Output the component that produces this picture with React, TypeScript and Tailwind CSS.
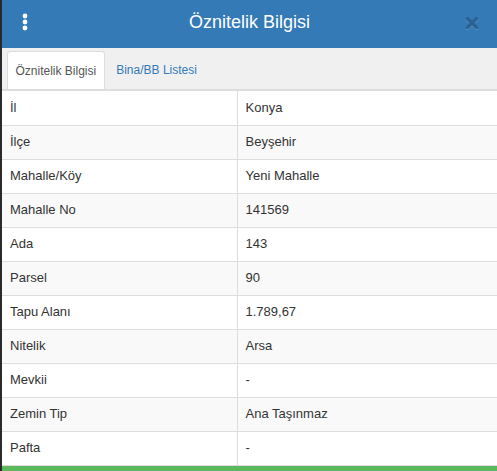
const rows: [string, string][] = [
  ['İl', 'Konya'],
  ['İlçe', 'Beyşehir'],
  ['Mahalle/Köy', 'Yeni Mahalle'],
  ['Mahalle No', '141569'],
  ['Ada', '143'],
  ['Parsel', '90'],
  ['Tapu Alanı', '1.789,67'],
  ['Nitelik', 'Arsa'],
  ['Mevkii', '-'],
  ['Zemin Tip', 'Ana Taşınmaz'],
  ['Pafta', '-'],
]

function MenuDots() {
  return (
    <svg width="10" height="22" viewBox="0 0 10 22" aria-hidden="true">
      <circle cx="5" cy="5" r="2.4" fill="#fff" />
      <circle cx="5" cy="11" r="2.4" fill="#fff" />
      <circle cx="5" cy="17" r="2.4" fill="#fff" />
    </svg>
  )
}

function CloseIcon() {
  return (
    <svg width="14" height="14" viewBox="0 0 14 14" aria-hidden="true">
      <path d="M2.5 2.5 L11.5 11.5 M11.5 2.5 L2.5 11.5" stroke="rgba(255,255,255,0.25)" strokeWidth="3.4" strokeLinecap="round" transform="translate(0 0.8)" />
      <path d="M2.5 2.5 L11.5 11.5 M11.5 2.5 L2.5 11.5" stroke="#2a6192" strokeWidth="3.4" strokeLinecap="round" />
    </svg>
  )
}

export default function App() {
  return (
    <div className="h-[471px] w-[497px] overflow-hidden border-l-2 border-[#2a2a2a] bg-white font-['Liberation_Sans',Arial,sans-serif] text-[#333]">
      <header className="relative flex h-[48px] items-center justify-center bg-[#337ab7]">
        <button className="absolute left-[18px] top-[11px] flex items-center" aria-label="Menü">
          <MenuDots />
        </button>
        <h1 className="-mt-[5px] text-[18px] leading-none text-white">Öznitelik Bilgisi</h1>
        <button className="absolute right-[18px] top-[16px]" aria-label="Kapat">
          <CloseIcon />
        </button>
      </header>

      <nav className="flex h-[43px] items-end gap-[4px] border-b-2 border-[#ddd] bg-[#f0f0f0] pl-[5px]">
        <div className="flex h-[38px] items-center rounded-t-[3px] border border-b-0 border-[#ddd] bg-white px-[7.5px] text-[12px] text-[#555]">
          Öznitelik Bilgisi
        </div>
        <div className="flex h-[38px] items-center px-[7.5px] text-[12px] text-[#337ab7]">Bina/BB Listesi</div>
      </nav>

      <table className="w-full border-collapse text-[13px]">
        <tbody>
          {rows.map(([label, value], i) => (
            <tr key={label} className={`h-[34px] border-b border-[#ddd] ${i % 2 === 1 ? 'bg-[#f9f9f9]' : 'bg-white'}`}>
              <td className="w-[235px] border-r border-[#ddd] px-[8px] align-middle">{label}</td>
              <td className="px-[8px] align-middle">{value}</td>
            </tr>
          ))}
        </tbody>
      </table>

      <div className="h-[8px] bg-[#5cb85c]" />
    </div>
  )
}
